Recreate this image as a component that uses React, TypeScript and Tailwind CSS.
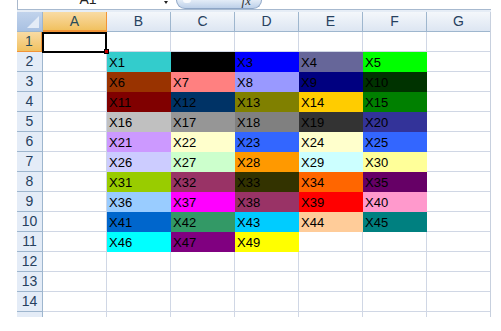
import React from 'react';

// --- Sheet data ---
const COLS = ['A', 'B', 'C', 'D', 'E', 'F', 'G'];
const ROW_COUNT = 14;

type Fill = { label: string; cls: string };

// rows 2..11, columns B..F (Excel 56 colour palette)
const FILLS: Record<number, Fill[]> = {
  2: [
    { label: 'X1', cls: 'bg-[#33cccc] border-[#33cccc]' },
    { label: 'X2', cls: 'bg-[#000000] border-[#000000]' },
    { label: 'X3', cls: 'bg-[#0000ff] border-[#0000ff]' },
    { label: 'X4', cls: 'bg-[#666699] border-[#666699]' },
    { label: 'X5', cls: 'bg-[#00ff00] border-[#00ff00]' },
  ],
  3: [
    { label: 'X6', cls: 'bg-[#993300] border-[#993300]' },
    { label: 'X7', cls: 'bg-[#ff8080] border-[#ff8080]' },
    { label: 'X8', cls: 'bg-[#9999ff] border-[#9999ff]' },
    { label: 'X9', cls: 'bg-[#000080] border-[#000080]' },
    { label: 'X10', cls: 'bg-[#003300] border-[#003300]' },
  ],
  4: [
    { label: 'X11', cls: 'bg-[#800000] border-[#800000]' },
    { label: 'X12', cls: 'bg-[#003366] border-[#003366]' },
    { label: 'X13', cls: 'bg-[#808000] border-[#808000]' },
    { label: 'X14', cls: 'bg-[#ffcc00] border-[#ffcc00]' },
    { label: 'X15', cls: 'bg-[#008000] border-[#008000]' },
  ],
  5: [
    { label: 'X16', cls: 'bg-[#c0c0c0] border-[#c0c0c0]' },
    { label: 'X17', cls: 'bg-[#969696] border-[#969696]' },
    { label: 'X18', cls: 'bg-[#808080] border-[#808080]' },
    { label: 'X19', cls: 'bg-[#333333] border-[#333333]' },
    { label: 'X20', cls: 'bg-[#333399] border-[#333399]' },
  ],
  6: [
    { label: 'X21', cls: 'bg-[#cc99ff] border-[#cc99ff]' },
    { label: 'X22', cls: 'bg-[#ffffcc] border-[#ffffcc]' },
    { label: 'X23', cls: 'bg-[#3366ff] border-[#3366ff]' },
    { label: 'X24', cls: 'bg-[#ffffcc] border-[#ffffcc]' },
    { label: 'X25', cls: 'bg-[#3366ff] border-[#3366ff]' },
  ],
  7: [
    { label: 'X26', cls: 'bg-[#ccccff] border-[#ccccff]' },
    { label: 'X27', cls: 'bg-[#ccffcc] border-[#ccffcc]' },
    { label: 'X28', cls: 'bg-[#ff9900] border-[#ff9900]' },
    { label: 'X29', cls: 'bg-[#ccffff] border-[#ccffff]' },
    { label: 'X30', cls: 'bg-[#ffff99] border-[#ffff99]' },
  ],
  8: [
    { label: 'X31', cls: 'bg-[#99cc00] border-[#99cc00]' },
    { label: 'X32', cls: 'bg-[#993366] border-[#993366]' },
    { label: 'X33', cls: 'bg-[#333300] border-[#333300]' },
    { label: 'X34', cls: 'bg-[#ff6600] border-[#ff6600]' },
    { label: 'X35', cls: 'bg-[#660066] border-[#660066]' },
  ],
  9: [
    { label: 'X36', cls: 'bg-[#99ccff] border-[#99ccff]' },
    { label: 'X37', cls: 'bg-[#ff00ff] border-[#ff00ff]' },
    { label: 'X38', cls: 'bg-[#993366] border-[#993366]' },
    { label: 'X39', cls: 'bg-[#ff0000] border-[#ff0000]' },
    { label: 'X40', cls: 'bg-[#ff99cc] border-[#ff99cc]' },
  ],
  10: [
    { label: 'X41', cls: 'bg-[#0066cc] border-[#0066cc]' },
    { label: 'X42', cls: 'bg-[#339966] border-[#339966]' },
    { label: 'X43', cls: 'bg-[#00ccff] border-[#00ccff]' },
    { label: 'X44', cls: 'bg-[#ffcc99] border-[#ffcc99]' },
    { label: 'X45', cls: 'bg-[#008080] border-[#008080]' },
  ],
  11: [
    { label: 'X46', cls: 'bg-[#00ffff] border-[#00ffff]' },
    { label: 'X47', cls: 'bg-[#800080] border-[#800080]' },
    { label: 'X49', cls: 'bg-[#ffff00] border-[#ffff00]' },
  ],
};

const FONT = "font-['Liberation_Sans',Arial,sans-serif]";

const App: React.FC = () => {
  const rows = Array.from({ length: ROW_COUNT }, (_, i) => i + 1);

  return (
    <div className={`w-[501px] h-[331px] bg-white overflow-hidden ${FONT}`}>
      {/* Formula bar (scrolled off the top) */}
      <div className="flex h-[9px] pl-[17px]">
        <div className="flex w-[158px] h-full border-l border-[#a9b8cc] overflow-hidden">
          <div className="w-[140px] text-center text-[14px] leading-[14px] -mt-[8px] text-[#222]">A1</div>
          <div className="mt-[1px] ml-[6px] w-0 h-0 border-l-[2px] border-r-[2px] border-t-[3px] border-l-transparent border-r-transparent border-t-[#222]"></div>
        </div>
        <div className="flex items-start justify-between w-[86px] h-full ml-[1px] pl-[6px] pr-[10px] rounded-b-[10px] border border-t-0 border-[#8ea6c6] bg-gradient-to-b from-[#e3ecf7] to-[#bdd0e9] overflow-hidden">
          <div className="-mt-[3px] w-[8px] h-[6px] rounded-full bg-white/80"></div>
          <div className="-mt-[6px] text-[13px] leading-[13px] italic text-[#333] font-['Liberation_Serif',serif]">fx</div>
        </div>
      </div>
      <div className="ml-[17px] w-[474px] h-[1px] bg-[#a7b9cf]"></div>
      <div className="ml-[17px] w-[474px] h-[2px] bg-[#e6edf6]"></div>

      {/* Sheet */}
      <div className="relative ml-[17px] w-[474px] h-[305px] overflow-hidden border-r border-[#c7d0de]">
        <div className="grid grid-cols-[26px_repeat(7,64px)] auto-rows-[20px]">
          {/* select-all corner */}
          <div className="flex items-end justify-end p-[3px] bg-gradient-to-b from-[#c1d3ec] to-[#a9c1e2] border-r border-b border-[#9eb6ce]">
            <svg width="12" height="12" viewBox="0 0 12 12">
              <polygon points="12,0 12,12 0,12" fill="#e4ecf7" />
            </svg>
          </div>
          {COLS.map(c =>
            c === 'A' ? (
              <div key={c} className="flex items-center justify-center bg-gradient-to-b from-[#f9dba3] to-[#f1c15f] border-r border-b-2 border-[#f29436] text-[14px] text-[#274b5a]">
                {c}
              </div>
            ) : (
              <div key={c} className="flex items-center justify-center bg-gradient-to-b from-[#f4f7fb] to-[#dde6f2] border-r border-b border-[#9eb6ce] text-[14px] text-[#27415f]">
                {c}
              </div>
            )
          )}

          {rows.map(r => {
            const fills = FILLS[r] || [];
            return (
              <React.Fragment key={r}>
                {r === 1 ? (
                  <div className="flex items-center justify-center bg-gradient-to-b from-[#f9dba3] to-[#f1c15f] border-r-2 border-b border-[#f29436] text-[14px] text-[#274b5a]">
                    {r}
                  </div>
                ) : (
                  <div className="flex items-center justify-center bg-[#e4ecf7] border-r border-b border-[#9eb6ce] text-[14px] text-[#27415f]">
                    {r}
                  </div>
                )}
                {COLS.map((c, ci) => {
                  const f = ci >= 1 ? fills[ci - 1] : undefined;
                  if (f) {
                    return (
                      <div key={c} className={`flex items-end border-r border-b pl-[2px] text-[13px] leading-[16px] text-black ${f.cls}`}>
                        {f.label}
                      </div>
                    );
                  }
                  return <div key={c} className="border-r border-b border-[#d0d7e5] bg-white"></div>;
                })}
              </React.Fragment>
            );
          })}

          {/* partially visible next row */}
          <div className="bg-[#e4ecf7] border-r border-[#9eb6ce]"></div>
          {COLS.map(c => (
            <div key={c} className="border-r border-[#d0d7e5] bg-white"></div>
          ))}
        </div>

        {/* active cell A1 with fill handle */}
        <div className="absolute left-[25px] top-[20px] w-[65px] h-[21px] border-2 border-black pointer-events-none"></div>
        <div className="absolute left-[87px] top-[37px] w-[5px] h-[5px] bg-[#c00000] border border-black"></div>
      </div>
    </div>
  );
};

export default App;
